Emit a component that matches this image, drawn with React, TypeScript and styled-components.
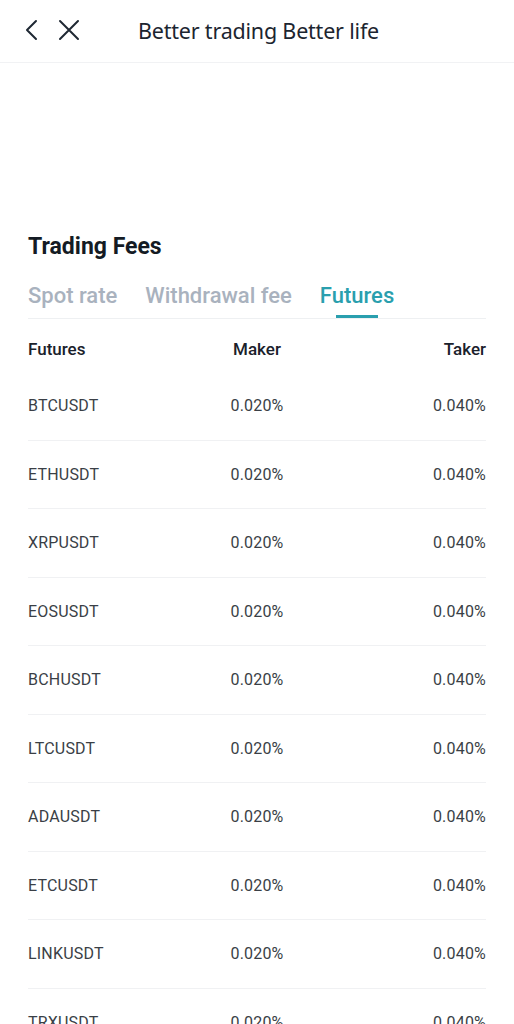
import React from "react";
import styled, { createGlobalStyle } from "styled-components";

const rows = [
  "BTCUSDT",
  "ETHUSDT",
  "XRPUSDT",
  "EOSUSDT",
  "BCHUSDT",
  "LTCUSDT",
  "ADAUSDT",
  "ETCUSDT",
  "LINKUSDT",
  "TRXUSDT",
];

const tabs = ["Spot rate", "Withdrawal fee", "Futures"];

export default function App() {
  return (
    <>
      <Global />
      <Page>
        <Header>
          <IconButton aria-label="back">
            <svg width="16" height="22" viewBox="0 0 16 22">
              <path d="M12 2 L3 11 L12 20" fill="none" stroke="#1f2833" strokeWidth="2" strokeLinecap="round" strokeLinejoin="round" />
            </svg>
          </IconButton>
          <IconButton aria-label="close">
            <svg width="22" height="22" viewBox="0 0 22 22">
              <path d="M2 2 L20 20 M20 2 L2 20" fill="none" stroke="#1f2833" strokeWidth="2" strokeLinecap="round" />
            </svg>
          </IconButton>
          <HeaderTitle>Better trading Better life</HeaderTitle>
        </Header>
        <Content>
          <Title>Trading Fees</Title>
          <Tabs>
            {tabs.map((t) => (
              <Tab key={t} $active={t === "Futures"}>
                {t}
              </Tab>
            ))}
          </Tabs>
          <HeadRow>
            <Cell $align="left">Futures</Cell>
            <Cell $align="center">Maker</Cell>
            <Cell $align="right">Taker</Cell>
          </HeadRow>
          {rows.map((r) => (
            <Row key={r}>
              <Cell $align="left">{r}</Cell>
              <Cell $align="center">0.020%</Cell>
              <Cell $align="right">0.040%</Cell>
            </Row>
          ))}
        </Content>
      </Page>
    </>
  );
}

const Global = createGlobalStyle`
  html, body { margin: 0; padding: 0; background: #fff; }
  body { font-family: "Noto Sans", "Open Sans", sans-serif; }
`;

const Page = styled.div`
  width: 514px;
  height: 1024px;
  overflow: hidden;
  background: #fff;
`;

const Header = styled.div`
  height: 63px;
  border-bottom: 1px solid #f1f2f4;
  display: flex;
  align-items: center;
  padding-left: 24px;
  padding-bottom: 2px;
  box-sizing: border-box;
`;

const IconButton = styled.div`
  display: flex;
  align-items: center;
  justify-content: center;
  width: 22px;
  height: 22px;
  margin-right: 10px;
  &:first-child { width: 16px; margin-right: 18px; }
`;

const HeaderTitle = styled.div`
  margin-left: 48px;
  font-family: "Noto Sans", sans-serif;
  font-size: 21.5px;
  color: #1c2530;
  letter-spacing: -0.2px;
`;

const Content = styled.div`
  padding: 166px 28px 0;
`;

const Title = styled.div`
  font-family: Roboto, sans-serif;
  font-weight: 700;
  font-size: 23px;
  color: #141b24;
  height: 34px;
  line-height: 36px;
`;

const Tabs = styled.div`
  display: flex;
  gap: 28px;
  margin-top: 15px;
  border-bottom: 1px solid #eef0f2;
`;

const Tab = styled.div<{ $active?: boolean }>`
  position: relative;
  font-family: Roboto, sans-serif;
  font-weight: 500;
  font-size: 22px;
  height: 40px;
  line-height: 36px;
  color: ${(p) => (p.$active ? "#2a9fae" : "#a9b2be")};
  &::after {
    content: "";
    display: ${(p) => (p.$active ? "block" : "none")};
    position: absolute;
    left: 16px;
    width: 42px;
    bottom: 0;
    height: 3px;
    background: #2a9fae;
  }
`;

const HeadRow = styled.div`
  display: grid;
  grid-template-columns: 1fr 1fr 1fr;
  align-items: center;
  height: 53px;
  padding-top: 6px;
  box-sizing: border-box;
  font-family: Roboto, sans-serif;
  font-weight: 500;
  font-size: 17px;
  color: #1a212b;
`;

const Row = styled.div`
  display: grid;
  grid-template-columns: 1fr 1fr 1fr;
  align-items: center;
  height: 68.5px;
  box-sizing: border-box;
  border-bottom: 1px solid #f0f1f3;
  font-family: Roboto, sans-serif;
  font-size: 16px;
  color: #3a3f46;
  letter-spacing: 0.2px;
`;

const Cell = styled.div<{ $align: "left" | "center" | "right" }>`
  text-align: ${(p) => p.$align};
`;
